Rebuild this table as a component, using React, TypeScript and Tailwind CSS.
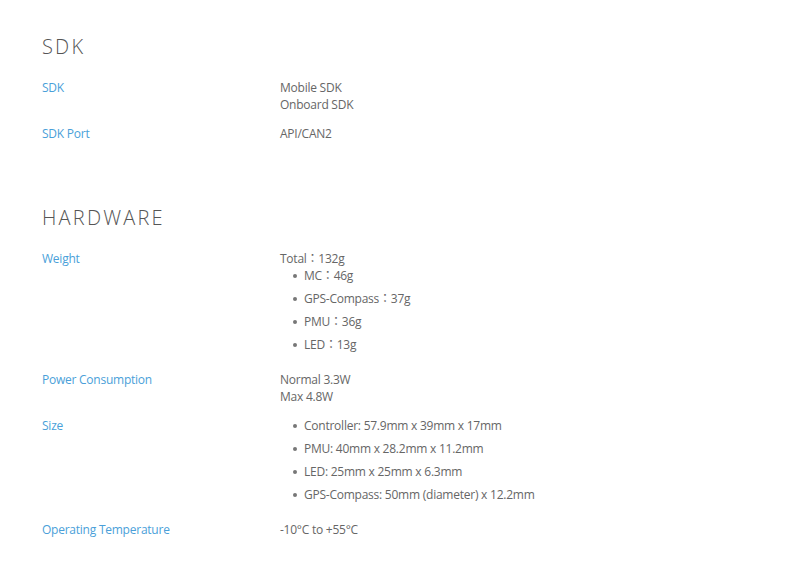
const specs = [
  {
    title: "SDK",
    rows: [
      { label: "SDK", lines: ["Mobile SDK", "Onboard SDK"] },
      { label: "SDK Port", lines: ["API/CAN2"] },
    ],
  },
  {
    title: "HARDWARE",
    rows: [
      {
        label: "Weight",
        lines: ["Total：132g"],
        items: ["MC：46g", "GPS-Compass：37g", "PMU：36g", "LED：13g"],
      },
      { label: "Power Consumption", lines: ["Normal 3.3W", "Max 4.8W"] },
      {
        label: "Size",
        items: [
          "Controller: 57.9mm x 39mm x 17mm",
          "PMU: 40mm x 28.2mm x 11.2mm",
          "LED: 25mm x 25mm x 6.3mm",
          "GPS-Compass: 50mm (diameter) x 12.2mm",
        ],
      },
      { label: "Operating Temperature", lines: ["-10°C to +55°C"] },
    ],
  },
];

type Row = { label: string; lines?: string[]; items?: string[] };

const SpecRow = ({ row }: { row: Row }) => {
  return (
    <div className="flex">
      <div className="w-[238px] shrink-0 text-[#4a9fd9]">{row.label}</div>
      <div className="flex flex-col text-[#666]">
        {row.lines?.map((l) => (
          <p key={l}>{l}</p>
        ))}
        {row.items && (
          <ul className="flex flex-col">
            {row.items.map((it) => (
              <li key={it} className="flex items-center mb-[6px]">
                <span className="w-[4px] h-[4px] rounded-full bg-[#777] ml-[13px] mr-[7px]"></span>
                {it}
              </li>
            ))}
          </ul>
        )}
      </div>
    </div>
  );
};

export default function App() {
  return (
    <div
      className="min-h-[579px] bg-white pl-[42px] pt-[33px] text-[12px] leading-[17px] tracking-[-0.02em]"
      style={{ fontFamily: '"Open Sans", "Noto Sans CJK JP", sans-serif' }}
    >
      {specs.map((sec, i) => (
        <section key={sec.title} className={i > 0 ? "mt-[62px]" : ""}>
          <h2 className="text-[20px] leading-[28px] font-light tracking-[0.11em] text-[#555] mb-[18px]">
            {sec.title}
          </h2>
          <div className="flex flex-col gap-y-3">
            {sec.rows.map((r) => (
              <SpecRow key={r.label} row={r} />
            ))}
          </div>
        </section>
      ))}
    </div>
  );
}
